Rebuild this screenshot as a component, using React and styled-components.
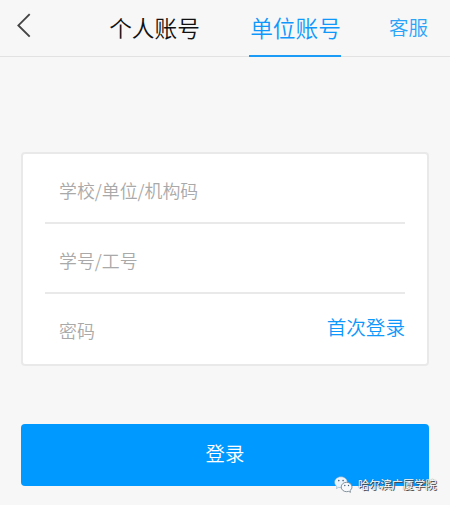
import React from "react";
import styled, { createGlobalStyle } from "styled-components";

const GlobalStyle = createGlobalStyle`
  * {
    box-sizing: border-box;
  }

  body {
    margin: 0;
    background-color: #f7f7f7;
    font-family: "Noto Sans CJK SC", sans-serif;
  }

  button,
  input {
    padding: 0;
    border: none;
    background: none;
    font-family: inherit;
    font-weight: 350;
  }
`;

const Container = styled.div`
  position: relative;
  width: 450px;
  height: 505px;
  overflow: hidden;
`;

const Header = styled.header`
  display: flex;
  height: 57px;
  padding: 0 22px 0 17px;
  border-bottom: 1px solid #e2e2e2;
`;

const BackButton = styled.button`
  display: flex;
  width: 14px;
  height: 26px;
  margin-top: 13px;
`;

const Tabs = styled.nav`
  display: flex;
  gap: 49px;
  margin-left: 77px;
`;

const Tab = styled.button`
  width: 92px;
  height: 57px;
  padding-left: 1px;
  border-bottom: 2px solid ${(props) => (props.$active ? "#1b9bf5" : "transparent")};
  color: ${(props) => (props.$active ? "#0f98fb" : "#111")};
  font-size: 22.7px;
  line-height: 55px;
  white-space: nowrap;
`;

const Service = styled.button`
  margin-left: auto;
  padding-bottom: 3px;
  color: #2ba3f7;
  font-size: 19.5px;
  line-height: 53px;
`;

const Form = styled.form`
  padding: 95px 21px 0;
`;

const Fields = styled.div`
  padding: 0 22px;
  border: 2px solid #e9e9e9;
  border-radius: 4px;
  background-color: #fff;
`;

const Field = styled.div`
  display: flex;
  align-items: center;
  height: ${(props) => props.$height}px;
  padding-left: 14px;

  & + & {
    border-top: 2px solid #e9e9e9;
  }
`;

const Input = styled.input`
  flex: 1;
  min-width: 0;
  height: 30px;
  padding-top: ${(props) => props.$drop || 0}px;
  font-size: 17.9px;
  outline: none;

  &::placeholder {
    color: #a9a9a9;
  }
`;

const FirstLogin = styled.button`
  margin-bottom: 4px;
  color: #0f98fb;
  font-size: 19.6px;
  line-height: 30px;
`;

const Submit = styled.button`
  width: 100%;
  height: 62px;
  margin-top: 58px;
  padding-bottom: 4px;
  border-radius: 4px;
  background-color: #0099ff;
  color: #fff;
  font-size: 19.4px;
  line-height: 58px;
`;

const Watermark = styled.div`
  position: absolute;
  top: 475px;
  left: 334px;
  display: flex;
  align-items: center;
  gap: 5px;
  height: 19px;
  color: #fff;
  font-size: 11.2px;
  line-height: 19px;
  white-space: nowrap;

  & span {
    padding-bottom: 1px;
    text-shadow: 1px 1px 0 #444, 0 0 1px #555;
  }
`;

const BackIcon = () => (
  <svg width="14" height="26" viewBox="0 0 14 26" fill="none">
    <path d="M12.7 1.2 1.4 12.4 12.7 23.6" stroke="#444" strokeWidth="1.9" />
  </svg>
);

const WechatIcon = () => (
  <svg width="19" height="17" viewBox="0 0 19 17">
    <path
      d="M7 .8C3.4.8.6 3.2.6 6.3c0 1.8.9 3.3 2.3 4.3l-.5 2 2.2-1.2c.8.2 1.6.3 2.4.3 3.6 0 6.4-2.4 6.4-5.4S10.6.8 7 .8Z"
      fill="#e9f4fc"
      stroke="#7c9eb5"
      strokeWidth=".5"
    />
    <path
      d="M12.6 6.3c-3.1 0-5.4 2-5.4 4.7s2.4 4.7 5.4 4.7c.7 0 1.4-.1 2-.3l1.9.9-.5-1.7c1.2-.9 2-2.2 2-3.6 0-2.7-2.4-4.7-5.4-4.7Z"
      fill="#f7f9fa"
      stroke="#687985"
      strokeWidth=".8"
    />
    <g fill="#436175">
      <circle cx="4.8" cy="4.6" r=".8" />
      <circle cx="9.1" cy="4.6" r=".8" />
      <circle cx="10.8" cy="9.5" r=".7" />
      <circle cx="14.5" cy="9.5" r=".7" />
    </g>
  </svg>
);

const App = () => {
  return (
    <Container>
      <GlobalStyle />
      <Header>
        <BackButton aria-label="返回">
          <BackIcon />
        </BackButton>
        <Tabs>
          <Tab>个人账号</Tab>
          <Tab $active>单位账号</Tab>
        </Tabs>
        <Service>客服</Service>
      </Header>
      <Form onSubmit={(e) => e.preventDefault()}>
        <Fields>
          <Field $height={68}>
            <Input placeholder="学校/单位/机构码" $drop={3} />
          </Field>
          <Field $height={70}>
            <Input placeholder="学号/工号" $drop={3} />
          </Field>
          <Field $height={72}>
            <Input type="password" placeholder="密码" $drop={1} />
            <FirstLogin type="button">首次登录</FirstLogin>
          </Field>
        </Fields>
        <Submit>登录</Submit>
      </Form>
      <Watermark>
        <WechatIcon />
        <span>哈尔滨广厦学院</span>
      </Watermark>
    </Container>
  );
};

export default App;
